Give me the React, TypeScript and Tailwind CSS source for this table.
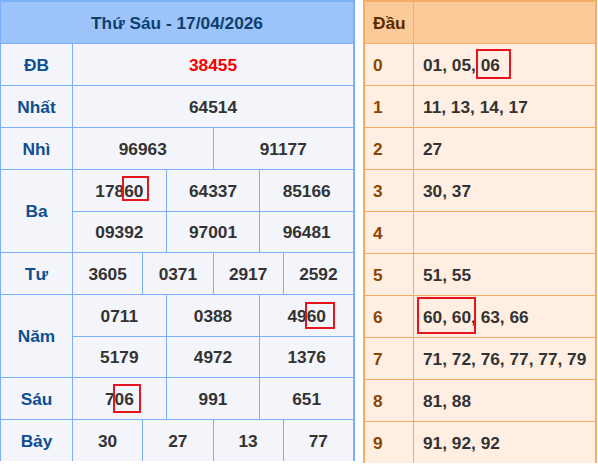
import React from "react";

const font = { fontFamily: '"Liberation Sans", Arial, sans-serif' };

function LRow({ label, cells, red }: { label: string; cells: string[][]; red?: boolean }) {
  return (
    <div className="flex border-t border-[#7cb0f6]">
      <div className="w-[71px] shrink-0 flex items-center justify-center pt-[2px] text-[#0e4f8f] bg-[#f3f5fa]">{label}</div>
      <div className="flex-1 flex flex-col">
        {cells.map((row, i) => (
          <div key={i} className={`flex h-[41px] ${i > 0 ? "border-t border-[#7cb0f6]" : ""}`}>
            {row.map((c, j) => (
              <div key={j} className={`flex-1 border-l border-[#7cb0f6] bg-[#f3f5fa] flex items-center justify-center pt-[2px] ${red ? "text-[#f70000]" : "text-[#333333]"}`}>
                {c}
              </div>
            ))}
          </div>
        ))}
      </div>
    </div>
  );
}

function RRow({ d, v }: { d: string; v: string }) {
  return (
    <div className="flex h-[42px] border-t border-[#f5ad63] bg-[#ffefe2]">
      <div className="w-[48px] shrink-0 flex items-center pl-[8px] pt-[2px] text-[#8a4604]">{d}</div>
      <div className="flex-1 border-l border-[#f5ad63] flex items-center pl-[9px] pt-[2px] text-[#333333]">{v}</div>
    </div>
  );
}

export default function App() {
  return (
    <div className="relative w-[598px] h-[464px] overflow-hidden bg-white font-bold text-[17.3px]" style={font}>
      <div className="flex gap-[8px] items-start">
        <div className="w-[355px] border-t-2 border-l border-r-2 border-[#7cb0f6]">
          <div className="h-[41px] bg-[#9dc3fb] flex items-center justify-center pt-[2px] text-[#0e3f6f]">Thứ Sáu - 17/04/2026</div>
          <LRow label="ĐB" cells={[["38455"]]} red />
          <LRow label="Nhất" cells={[["64514"]]} />
          <LRow label="Nhì" cells={[["96963", "91177"]]} />
          <LRow label="Ba" cells={[["17860", "64337", "85166"], ["09392", "97001", "96481"]]} />
          <LRow label="Tư" cells={[["3605", "0371", "2917", "2592"]]} />
          <LRow label="Năm" cells={[["0711", "0388", "4960"], ["5179", "4972", "1376"]]} />
          <LRow label="Sáu" cells={[["706", "991", "651"]]} />
          <LRow label="Bảy" cells={[["30", "27", "13", "77"]]} />
        </div>
        <div className="w-[234px] border-t-2 border-l-2 border-r-2 border-[#f5ad63]">
          <div className="flex h-[41px] bg-[#fbca98]">
            <div className="w-[48px] shrink-0 flex items-center pl-[8px] pt-[2px] text-[#5a2a00]">Đầu</div>
            <div className="flex-1 border-l border-[#f5ad63]"></div>
          </div>
          <RRow d="0" v="01, 05, 06" />
          <RRow d="1" v="11, 13, 14, 17" />
          <RRow d="2" v="27" />
          <RRow d="3" v="30, 37" />
          <RRow d="4" v="" />
          <RRow d="5" v="51, 55" />
          <RRow d="6" v="60, 60, 63, 66" />
          <RRow d="7" v="71, 72, 76, 77, 77, 79" />
          <RRow d="8" v="81, 88" />
          <RRow d="9" v="91, 92, 92" />
        </div>
      </div>
      <div className="absolute left-[122px] top-[176px] w-[27px] h-[25px] border-2 border-[#e5141d]" />
      <div className="absolute left-[305px] top-[302px] w-[30px] h-[27px] border-2 border-[#e5141d]" />
      <div className="absolute left-[113px] top-[384px] w-[28px] h-[29px] border-2 border-[#e5141d]" />
      <div className="absolute left-[476px] top-[49px] w-[35px] h-[30px] border-2 border-[#e5141d]" />
      <div className="absolute left-[417px] top-[297px] w-[59px] h-[37px] border-2 border-[#e5141d]" />
    </div>
  );
}
